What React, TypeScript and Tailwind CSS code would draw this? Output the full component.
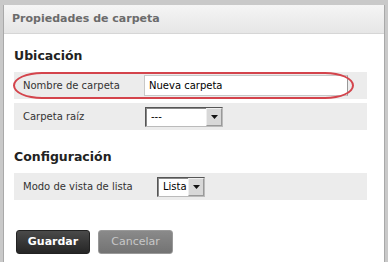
const font = { fontFamily: '"DejaVu Sans", Verdana, sans-serif' };

function SelectBox({ value, width }: { value: string; width: string }) {
  return (
    <div
      className={`flex h-[20px] ${width} items-stretch border border-[#555] border-r-[#bbb] border-b-[#bbb] bg-white shadow-[inset_1px_1px_0_#888]`}
    >
      <span className="flex-1 pl-[5px] text-[10px] leading-[18px] text-black">{value}</span>
      <span className="flex w-[16px] items-center justify-center border border-[#999] border-l-[#eee] border-t-[#eee] bg-[#d8d8d8]">
        <svg width="7" height="4" viewBox="0 0 7 4">
          <path d="M0 0h7L3.5 4z" fill="#111" />
        </svg>
      </span>
    </div>
  );
}

function Row({ label, children, labelWidth }: { label: string; children: React.ReactNode; labelWidth: string }) {
  return (
    <div className="flex h-[27px] items-center bg-[#ececec] pl-[9px]">
      <span className={`${labelWidth} shrink-0 text-[10px] text-[#333]`}>{label}</span>
      {children}
    </div>
  );
}

export default function App() {
  return (
    <div className="h-[262px] w-[388px] overflow-hidden bg-[#c9c9c9] pl-[3px] pr-[3px] pt-[5px]" style={font}>
      <div className="relative h-[280px] border-l border-r border-[#a9a9a9] bg-white">
        <div className="flex h-[29px] items-center border-b border-[#d6d6d6] bg-gradient-to-b from-[#f5f5f5] to-[#e6e6e6] pl-[8px]">
          <span className="text-[11px] font-bold text-[#6b6b6b]">Propiedades de carpeta</span>
        </div>

        <div className="pl-[10px] pr-[17px]">
          <h2 className="mt-[12px] text-[12.5px] font-bold leading-[20px] text-[#222]">Ubicación</h2>
          <div className="mt-[6px] flex flex-col gap-[4px]">
            <Row label="Nombre de carpeta" labelWidth="w-[121px]">
              <div className="flex h-[21px] w-[204px] items-center border border-[#c8c8c8] border-r-[#999] bg-white pl-[4px] text-[10px] text-black">
                Nueva carpeta
              </div>
            </Row>
            <Row label="Carpeta raíz" labelWidth="w-[122px]">
              <SelectBox value="---" width="w-[78px]" />
            </Row>
          </div>

          <h2 className="mt-[17px] text-[12.5px] font-bold leading-[20px] text-[#222]">Configuración</h2>
          <div className="mt-[6px]">
            <Row label="Modo de vista de lista" labelWidth="w-[134px]">
              <SelectBox value="Lista" width="w-[48px]" />
            </Row>
          </div>

          <div className="mt-[30px] flex gap-[8px] pl-[2px]">
            <button className="h-[24px] w-[74px] rounded-[3px] border border-[#222] bg-gradient-to-b from-[#4a4a4a] to-[#262626] text-[11px] font-bold text-white">
              Guardar
            </button>
            <button className="h-[24px] w-[75px] rounded-[3px] border border-[#999] bg-gradient-to-b from-[#8a8a8a] to-[#737373] text-[11px] text-[#c8c8c8]">
              Cancelar
            </button>
          </div>
        </div>

        <div className="pointer-events-none absolute left-[9px] top-[67px] h-[27px] w-[341px] rounded-[30px/14px] border-2 border-[#d4444c]" />
      </div>
    </div>
  );
}
